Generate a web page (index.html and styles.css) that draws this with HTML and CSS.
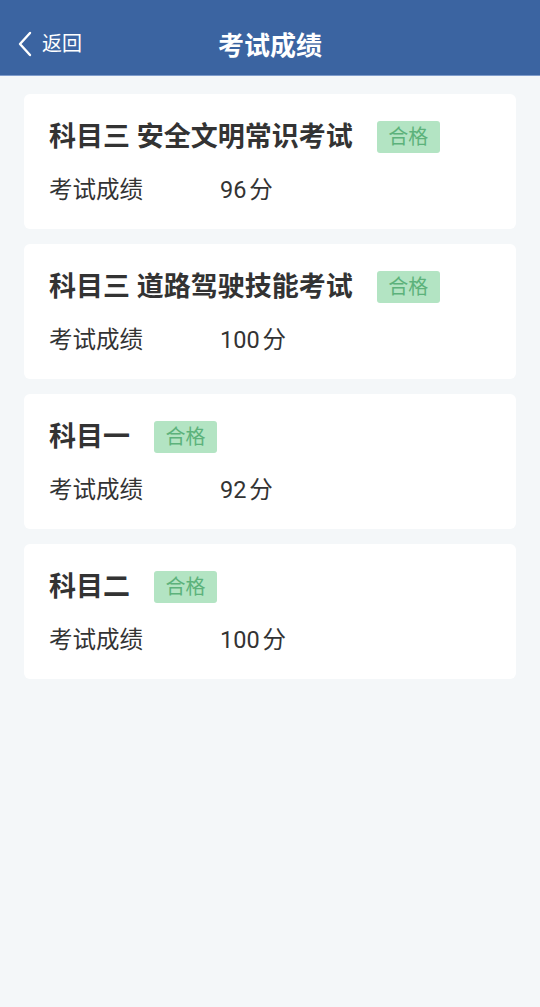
FILE: index.html
```html
<!DOCTYPE html>
<html lang="zh-CN">
<head>
    <meta charset="UTF-8">
    <meta name="viewport" content="width=device-width, initial-scale=1.0">
    <title>考试成绩</title>
    <link rel="stylesheet" href="styles.css">
</head>
<body>
    <div class="header">
        <div class="back">
            <svg width="16" height="26" viewBox="0 0 16 26"><path d="M13 2 L3 13 L13 24" fill="none" stroke="#fff" stroke-width="2.4" stroke-linecap="round" stroke-linejoin="round"/></svg>
            <span>返回</span>
        </div>
        <h1>考试成绩</h1>
    </div>

    <div class="list">
        <div class="card">
            <div class="title">科目三 安全文明常识考试<span class="badge">合格</span></div>
            <div class="score"><span class="label">考试成绩</span><span>96 分</span></div>
        </div>
        <div class="card">
            <div class="title">科目三 道路驾驶技能考试<span class="badge">合格</span></div>
            <div class="score"><span class="label">考试成绩</span><span>100 分</span></div>
        </div>
        <div class="card">
            <div class="title">科目一<span class="badge">合格</span></div>
            <div class="score"><span class="label">考试成绩</span><span>92 分</span></div>
        </div>
        <div class="card">
            <div class="title">科目二<span class="badge">合格</span></div>
            <div class="score"><span class="label">考试成绩</span><span>100 分</span></div>
        </div>
    </div>
</body>
</html>
```

FILE: styles.css
```css
body {
    margin: 0;
    font-family: Roboto, "Noto Sans CJK SC", sans-serif;
    background-color: #f4f7f9;
    color: #333;
}
.header {
    position: relative;
    height: 76px;
    box-sizing: border-box;
    padding-top: 12px;
    background-color: #3b64a1;
    border-bottom: 1px solid #7f9ccb;
    display: flex;
    align-items: center;
    justify-content: center;
}
.header h1 {
    margin: 0;
    font-size: 26px;
    font-weight: bold;
    color: #fff;
}
.back {
    position: absolute;
    left: 17px;
    top: 31px;
    display: flex;
    align-items: center;
    gap: 9px;
    color: #fff;
    font-size: 20px;
    line-height: 26px;
}
.list {
    padding: 18px 24px;
    display: flex;
    flex-direction: column;
    gap: 15px;
}
.card {
    background-color: #fff;
    border-radius: 6px;
    padding: 27px 25px 25px;
}
.title {
    display: flex;
    align-items: center;
    font-size: 27px;
    font-weight: bold;
    line-height: 32px;
    color: #333;
}
.badge {
    margin-left: 24px;
    width: 63px;
    height: 32px;
    border-radius: 3px;
    background-color: #b3e4c3;
    color: #5cb27b;
    font-size: 20px;
    font-weight: normal;
    line-height: 32px;
    text-align: center;
}
.score {
    margin-top: 23px;
    display: flex;
    font-size: 23.5px;
    line-height: 28px;
    color: #333;
    word-spacing: -3px;
}
.label {
    width: 171px;
}
```
